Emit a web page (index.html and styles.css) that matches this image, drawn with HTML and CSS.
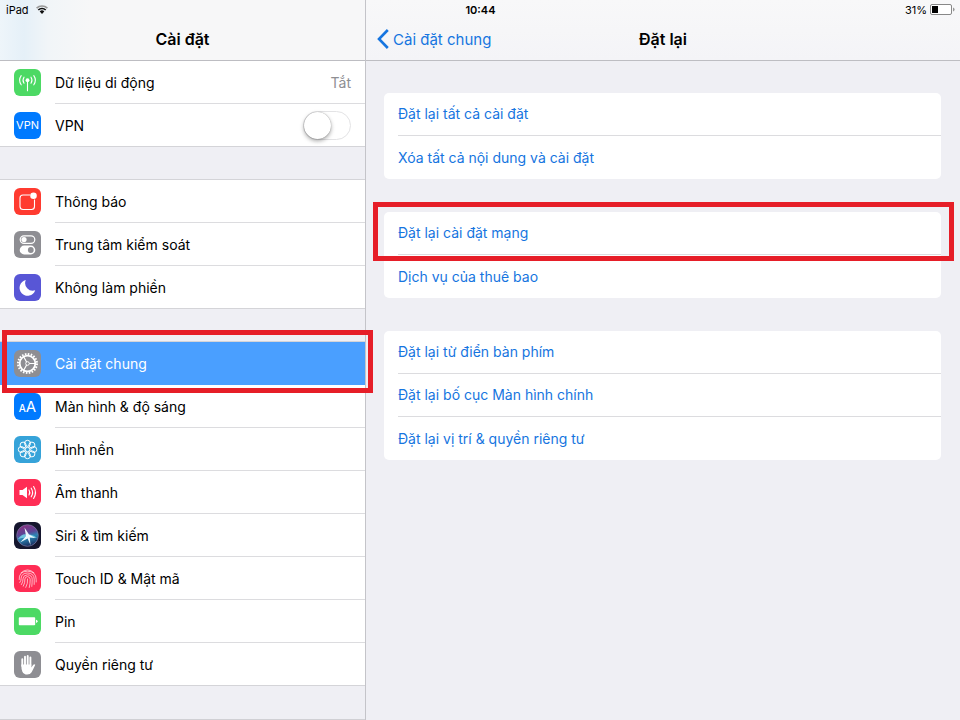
FILE: index.html
```html
<!DOCTYPE html>
<html lang="vi">

<head>
    <meta charset="UTF-8">
    <meta name="viewport" content="width=device-width, initial-scale=1.0">
    <title>Cài đặt</title>
    <link rel="stylesheet" href="styles.css">
</head>

<body>
    <!-- Status bar -->
    <div class="status-bar">
        <div class="status-left">
            <span>iPad</span>
            <svg width="12" height="9" viewBox="0 0 12 9">
                <path d="M6 9 L3.7 6.4 A3.2 3.2 0 0 1 8.3 6.4 Z" fill="#111" />
                <path d="M2.3 5 A5.3 5.3 0 0 1 9.7 5" fill="none" stroke="#111" stroke-width="1.7" />
                <path d="M0.6 3.1 A7.8 7.8 0 0 1 11.4 3.1" fill="none" stroke="#999" stroke-width="1.6" />
            </svg>
        </div>
        <div class="status-time">10:44</div>
        <div class="status-right">
            <span>31%</span>
            <svg width="25" height="11" viewBox="0 0 25 11">
                <rect x="0.5" y="0.5" width="21" height="10" rx="1.5" fill="#fff" stroke="#888" />
                <rect x="2" y="2" width="6" height="7" fill="#000" />
                <path d="M23 3.5 Q24.6 4 24.6 5.5 Q24.6 7 23 7.5 Z" fill="#999" />
            </svg>
        </div>
    </div>

    <!-- Sidebar -->
    <aside class="sidebar">
        <header class="bar bar-left">
            <h1>Cài đặt</h1>
        </header>
        <nav class="menu">
            <ul class="group">
                <li>
                    <a class="row" href="#">
                        <svg class="icon green" viewBox="0 0 27 27" fill="none" stroke="#fff" stroke-width="1.1" stroke-linecap="round">
                            <circle cx="13.5" cy="11.2" r="1.9" fill="#fff" stroke="none" />
                            <path d="M13.5 12V21.8" />
                            <path d="M10 8.2Q8 11.2 10 14.2M17 8.2Q19 11.2 17 14.2M7.2 6.6Q4 11.2 7.2 15.8M19.8 6.6Q23 11.2 19.8 15.8" />
                        </svg>
                        <span class="label">Dữ liệu di động <span class="value">Tắt</span></span>
                    </a>
                </li>
                <li>
                    <div class="row">
                        <span class="icon blue vpn">VPN</span>
                        <span class="label"><label for="vpn">VPN</label><input class="switch" type="checkbox" id="vpn"></span>
                    </div>
                </li>
            </ul>

            <ul class="group">
                <li>
                    <a class="row" href="#">
                        <svg class="icon red" viewBox="0 0 27 27">
                            <path d="M16 7H9Q6 7 6 10V18.5Q6 21.5 9 21.5H17.5Q20.5 21.5 20.5 18.5V11.5" fill="none" stroke="#fff" stroke-width="1.1" />
                            <circle cx="19.5" cy="7.7" r="3.3" fill="#fff" />
                        </svg>
                        <span class="label">Thông báo</span>
                    </a>
                </li>
                <li>
                    <a class="row" href="#">
                        <svg class="icon gray" viewBox="0 0 27 27">
                            <rect x="6.2" y="4.8" width="14.6" height="7.6" rx="3.8" fill="none" stroke="#fff" stroke-width="1.2" />
                            <circle cx="10" cy="8.6" r="2.6" fill="#fff" />
                            <rect x="5.7" y="14.6" width="15.6" height="8.8" rx="4.4" fill="#fff" />
                            <circle cx="16.8" cy="19" r="2.9" fill="#8e8e93" />
                        </svg>
                        <span class="label">Trung tâm kiểm soát</span>
                    </a>
                </li>
                <li>
                    <a class="row" href="#">
                        <svg class="icon purple" viewBox="0 0 27 27">
                            <path d="M11.8 6A8 8 0 1 0 21.2 16.2A7.6 7.6 0 0 1 11.8 6Z" fill="#fff" />
                        </svg>
                        <span class="label">Không làm phiền</span>
                    </a>
                </li>
            </ul>

            <ul class="group">
                <li class="marked marked-left">
                    <a class="row active" href="#" aria-current="page">
                        <svg class="icon gray" viewBox="0 0 27 27" fill="none" stroke="#fff">
                            <circle cx="13.5" cy="13.5" r="9.5" stroke-width="2" stroke-dasharray="1.6 1.384" />
                            <circle cx="13.5" cy="13.5" r="7.8" stroke-width="1.8" />
                            <circle cx="13.5" cy="13.5" r="1.8" stroke-width="1" />
                            <path d="M15.3 13.5H21M12.6 12L9.7 6.8M12.6 15L9.7 20.2" stroke-width="1.2" />
                        </svg>
                        <span class="label">Cài đặt chung</span>
                    </a>
                </li>
                <li>
                    <a class="row" href="#">
                        <span class="icon blue letters"><small>A</small>A</span>
                        <span class="label">Màn hình &amp; độ sáng</span>
                    </a>
                </li>
                <li>
                    <a class="row" href="#">
                        <svg class="icon cyan" viewBox="0 0 27 27" fill="none" stroke="#fff" stroke-width="1">
                            <circle cx="13.5" cy="13.5" r="2.2" />
                            <circle cx="13.5" cy="7.3" r="3" />
                            <circle cx="17.9" cy="9.1" r="3" />
                            <circle cx="19.7" cy="13.5" r="3" />
                            <circle cx="17.9" cy="17.9" r="3" />
                            <circle cx="13.5" cy="19.7" r="3" />
                            <circle cx="9.1" cy="17.9" r="3" />
                            <circle cx="7.3" cy="13.5" r="3" />
                            <circle cx="9.1" cy="9.1" r="3" />
                        </svg>
                        <span class="label">Hình nền</span>
                    </a>
                </li>
                <li>
                    <a class="row" href="#">
                        <svg class="icon pink" viewBox="0 0 27 27">
                            <path d="M5.5 11H8.5L13 7.8V19.2L8.5 16H5.5Z" fill="#fff" />
                            <path d="M15 11Q16.6 13.5 15 16M17.2 9.2Q20 13.5 17.2 17.8M19.6 7.5Q23.4 13.5 19.6 19.5" fill="none" stroke="#fff" stroke-width="1.1" stroke-linecap="round" />
                        </svg>
                        <span class="label">Âm thanh</span>
                    </a>
                </li>
                <li>
                    <a class="row" href="#">
                        <svg class="icon siri" viewBox="0 0 27 27">
                            <defs>
                                <linearGradient id="orb" x1="0.3" y1="0" x2="0.6" y2="1">
                                    <stop offset="0" stop-color="#8a2f80" />
                                    <stop offset="0.4" stop-color="#5b4596" />
                                    <stop offset="0.6" stop-color="#2a86b4" />
                                    <stop offset="1" stop-color="#182a5c" />
                                </linearGradient>
                            </defs>
                            <circle cx="13.5" cy="13.5" r="10.8" fill="url(#orb)" stroke="#7d7aa5" stroke-width="0.7" />
                            <path d="M4 17Q8 11 13 12.5Q19 12 23 16Q18 15 14.5 15.5Q9 15 4 17Z" fill="#7fe3f0" opacity="0.75" />
                            <path d="M10.5 5.5L15 12.5L21.5 16L15.8 15.6L16.5 23L13.6 16.5L6 20.5L12 14.2Z" fill="#f2fbff" opacity="0.95" />
                        </svg>
                        <span class="label">Siri &amp; tìm kiếm</span>
                    </a>
                </li>
                <li>
                    <a class="row" href="#">
                        <svg class="icon pink" viewBox="0 0 27 27" fill="none" stroke="#ffd5dd" stroke-width="0.8" stroke-linecap="round">
                            <path d="M7 7.8Q13.5 1.8 20 7.8" />
                            <path d="M5.2 14.5Q4.6 6.3 13.5 6.2Q22 6.3 22.2 14.5V17" />
                            <path d="M5.8 17.5Q7.3 15.5 7.1 13.5Q7.3 8.2 13.5 8Q20 8.2 20.2 14V19.4" />
                            <path d="M7.4 19.6Q9.2 17 9 13.8Q9.3 10 13.5 9.8Q18 10 18.2 14.2Q18.2 18 17.8 21.4" />
                            <path d="M9.3 21.2Q11.2 17.8 10.9 14Q11.2 11.7 13.5 11.6Q16.2 11.8 16.2 14.4Q16.2 19 15.3 22.5" />
                            <path d="M11.8 22.4Q14 18.4 13.6 13.9" />
                        </svg>
                        <span class="label">Touch ID &amp; Mật mã</span>
                    </a>
                </li>
                <li>
                    <a class="row" href="#">
                        <svg class="icon green" viewBox="0 0 27 27" fill="#fff">
                            <rect x="4.8" y="9.3" width="16.4" height="8" rx="0.8" />
                            <path d="M22 11.7Q23.6 12 23.6 13.3Q23.6 14.6 22 14.9Z" />
                        </svg>
                        <span class="label">Pin</span>
                    </a>
                </li>
                <li>
                    <a class="row" href="#">
                        <svg class="icon gray" viewBox="0 0 27 27" fill="none" stroke="#fff" stroke-width="1.9" stroke-linecap="round">
                            <path d="M8.3 15V8.2M11 14V5.8M13.7 14V4.9M16.4 14V6.4" />
                            <path d="M7.3 13.5H17.4V16.5L19.3 13.7Q20.4 12.6 21.3 13.8Q19.4 18 17.6 21.3Q16.3 23.6 13.2 23.6Q9.8 23.6 8.4 20.8Q7.3 18.5 7.3 13.5Z" fill="#fff" stroke="none" />
                        </svg>
                        <span class="label">Quyền riêng tư</span>
                    </a>
                </li>
            </ul>
        </nav>
    </aside>

    <!-- Detail pane -->
    <main class="detail">
        <header class="bar bar-right">
            <a class="back" href="#">
                <svg width="12" height="20" viewBox="0 0 12 20" fill="none" stroke="#1675e0" stroke-width="2.6">
                    <path d="M10.8 1L2 10L10.8 19" />
                </svg>
                Cài đặt chung
            </a>
            <h2>Đặt lại</h2>
        </header>
        <div class="cards">
            <ul class="card">
                <li><button type="button">Đặt lại tất cả cài đặt</button></li>
                <li><button type="button">Xóa tất cả nội dung và cài đặt</button></li>
            </ul>
            <ul class="card">
                <li class="marked marked-right"><button type="button">Đặt lại cài đặt mạng</button></li>
                <li><button type="button">Dịch vụ của thuê bao</button></li>
            </ul>
            <ul class="card">
                <li><button type="button">Đặt lại từ điển bàn phím</button></li>
                <li><button type="button">Đặt lại bố cục Màn hình chính</button></li>
                <li><button type="button">Đặt lại vị trí &amp; quyền riêng tư</button></li>
            </ul>
        </div>
    </main>
</body>

</html>
```

FILE: styles.css
```css
/* General */
* {
    box-sizing: border-box;
}

body {
    margin: 0;
    height: 100vh;
    display: grid;
    grid-template-columns: 366px 1fr;
    grid-template-rows: 20px 1fr;
    overflow: hidden;
    font-family: Inter, "Liberation Sans", sans-serif;
    font-size: 14px;
    background-color: #efeff4;
    color: #000;
}

ul {
    list-style: none;
    margin: 0;
    padding: 0;
}

a {
    color: inherit;
    text-decoration: none;
}

h1,
h2 {
    margin: 0;
    font-size: 16px;
    font-weight: 600;
}

/* Status bar, shares its grid row with both panes */
.status-bar {
    grid-area: 1 / 1 / 2 / 3;
    z-index: 1;
    display: grid;
    grid-template-columns: 1fr auto 1fr;
    align-items: center;
    padding: 0 5px 1px 6px;
    font-size: 11px;
}

.status-left,
.status-right {
    display: flex;
    align-items: center;
    gap: 7px;
}

.status-right {
    justify-content: flex-end;
    gap: 3px;
}

.status-time {
    font-weight: 600;
}

/* Panes */
.sidebar {
    grid-area: 1 / 1 / 3 / 2;
    border-right: 1px solid #c4c4c9;
}

.detail {
    grid-area: 1 / 2 / 3 / 3;
}

.bar {
    height: 61px;
    padding-top: 18px;
    border-bottom: 1px solid #bdbdc2;
    background-color: #f7f7f8;
    align-items: center;
}

.bar-left {
    display: flex;
    justify-content: center;
    background-image: linear-gradient(90deg, #eef5fa 0, #e5f0f8 24px, #f1f5f8 48px, #f7f7f8 90px);
}

.bar-right {
    display: grid;
    grid-template-columns: 1fr auto 1fr;
    padding-left: 11px;
    padding-right: 11px;
    background-image: linear-gradient(#f8f8f9, #f4f4f7);
}

.back {
    display: flex;
    align-items: center;
    gap: 4px;
    font-size: 15px;
    color: #1675e0;
}

/* Sidebar menu */
.menu {
    display: flex;
    flex-direction: column;
    gap: 33px;
    padding-bottom: 33px;
    border-bottom: 1px solid #d0d0d4;
}

.group {
    background-color: #fff;
    box-shadow: 0 -1px #d4d4d8;
}

.group:first-child {
    box-shadow: none;
}

.row {
    display: flex;
    align-items: center;
    gap: 14px;
    height: 43px;
    padding-left: 14px;
}

.label {
    flex: 1;
    align-self: stretch;
    display: flex;
    align-items: center;
    justify-content: space-between;
    padding-right: 14px;
    border-bottom: 1px solid #dcdcdf;
}

.group li:last-child .row {
    border-bottom: 1px solid #d4d4d8;
}

.group li:last-child .label {
    border-bottom: none;
}

.value {
    color: #8e8e93;
}

.row.active {
    background-color: #4a9fff;
    color: #fff;
}

.row.active .label {
    border-bottom-color: #4a9fff;
}

/* Icons */
.icon {
    width: 27px;
    height: 27px;
    border-radius: 6px;
    flex: none;
    color: #fff;
}

.vpn,
.letters {
    display: flex;
    justify-content: center;
}

.vpn {
    align-items: center;
    font-size: 11px;
}

.letters {
    align-items: baseline;
    font-size: 15px;
    line-height: 27px;
}

.letters small {
    font-size: 10px;
    font-weight: 500;
}

.green {
    background-color: #4cd964;
}

.blue {
    background-color: #007aff;
}

.red {
    background-color: #ff3b30;
}

.gray {
    background-color: #8e8e93;
}

.purple {
    background-color: #5856d6;
}

.cyan {
    background-color: #36a3d9;
}

.pink {
    background-color: #ff2d55;
}

.siri {
    background-color: #15162e;
}

/* Switch */
.switch {
    appearance: none;
    width: 48px;
    height: 29px;
    margin: 0;
    border: 1px solid #e3e3e5;
    border-radius: 15px;
    background-color: #fff;
}

.switch::before {
    content: "";
    display: block;
    width: 27px;
    height: 27px;
    border-radius: 50%;
    background-color: #fff;
    box-shadow: 0 0 1px rgba(0, 0, 0, 0.4), 0 2px 4px rgba(0, 0, 0, 0.35);
}

.switch:checked {
    background-color: #4cd964;
}

.switch:checked::before {
    margin-left: auto;
}

/* Reset options */
.cards {
    display: flex;
    flex-direction: column;
    gap: 33px;
    padding: 32px 19px 32px 18px;
}

.card {
    background-color: #fff;
    border-radius: 5px;
}

.card li {
    height: 43px;
    padding-left: 14px;
}

.card button {
    width: 100%;
    height: 43px;
    padding: 0 0 1px;
    border: none;
    border-bottom: 1px solid #dcdcdf;
    background: none;
    font: inherit;
    text-align: left;
    color: #1675e0;
}

.card li:last-child button {
    border-bottom: none;
}

/* Red highlight frames */
.marked {
    position: relative;
}

.marked::after {
    content: "";
    position: absolute;
    border: 5px solid #e61e28;
    pointer-events: none;
    z-index: 2;
}

.marked-left::after {
    inset: -12px -8px -8px 2px;
}

.marked-right::after {
    inset: -10px -13px -6px -11px;
}
```
